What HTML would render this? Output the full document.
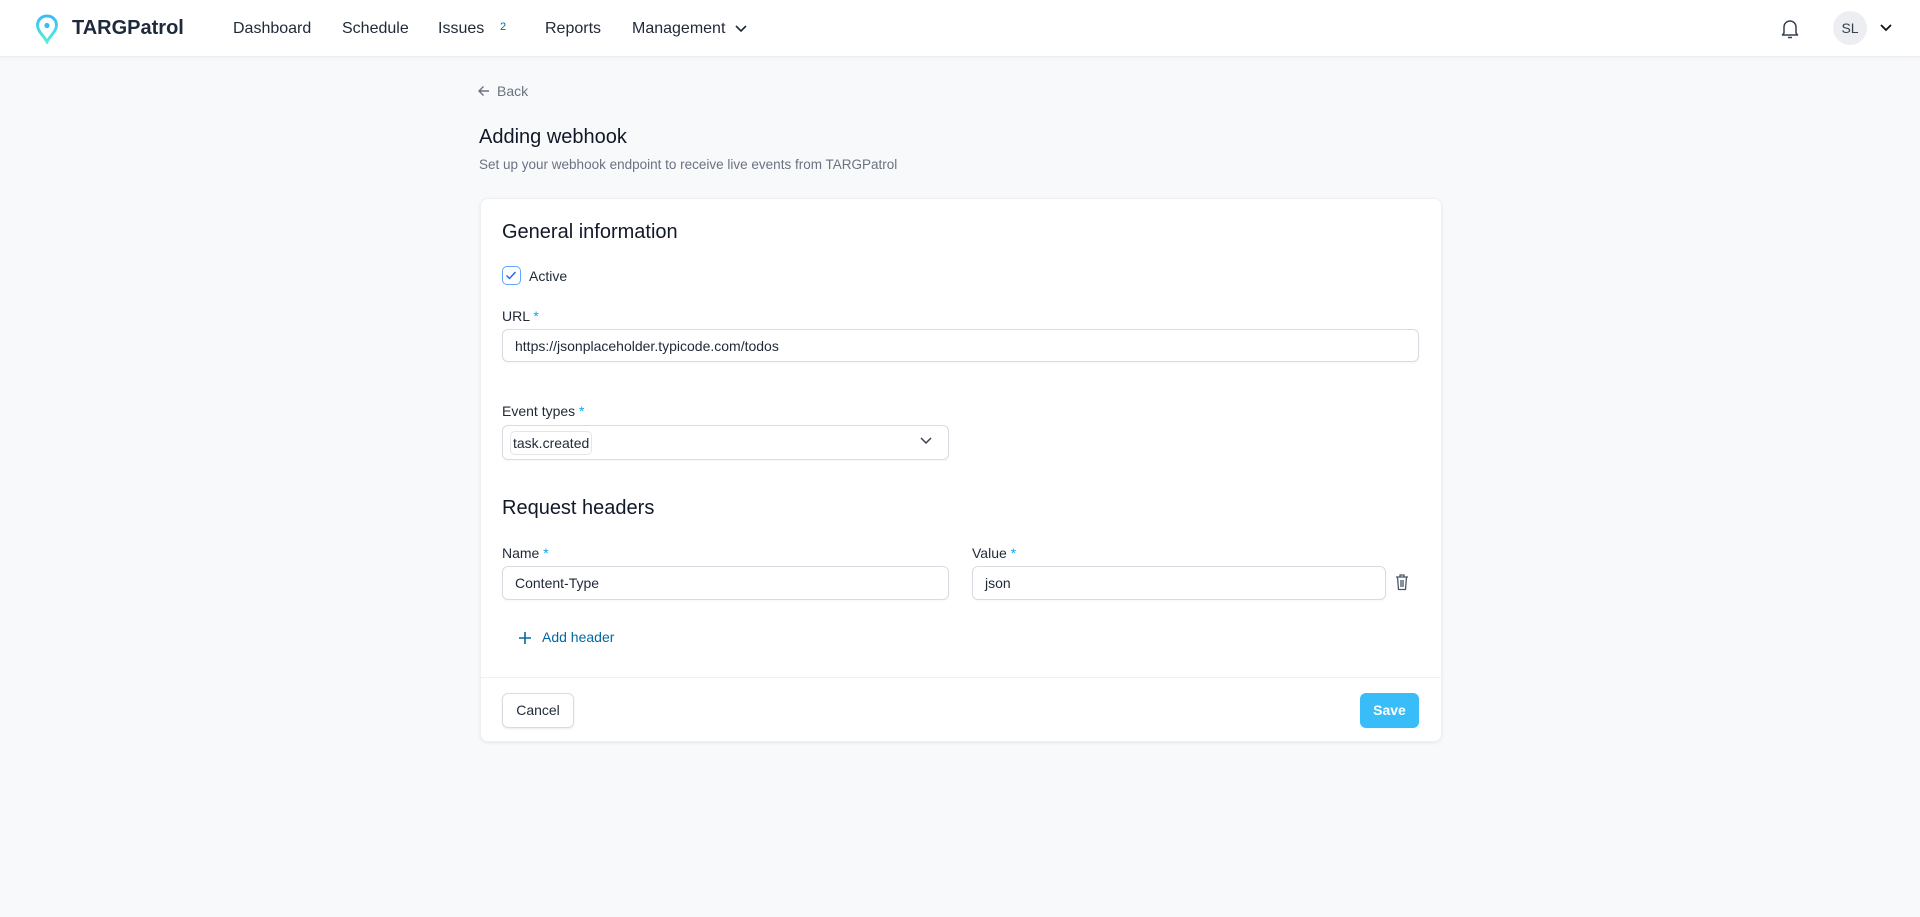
<!DOCTYPE html>
<html><head><meta charset="utf-8"><style>
*{box-sizing:border-box;margin:0;padding:0}
body{width:1920px;height:917px;background:#f8f9fb;font-family:"Liberation Sans",sans-serif;color:#1f2937;position:relative;overflow:hidden}
.abs{position:absolute}
.nav{position:absolute;left:0;top:0;width:1920px;height:57px;background:#fff;border-bottom:1px solid #eceef2;box-shadow:0 1px 3px rgba(0,0,0,.04)}
.nl{position:absolute;top:20px;font-size:16px;color:#1f2937}
.card{position:absolute;left:480px;top:198px;width:962px;height:544px;background:#fff;border-radius:8px;box-shadow:0 1px 3px rgba(0,0,0,.08);border:1px solid #eef0f3}
.lbl{position:absolute;font-size:14px;color:#1f2937}
.lbl b{color:#0ea5e9;font-weight:normal}
.inp{position:absolute;border:1px solid #d8dce2;border-radius:6px;background:#fff;font-size:14px;padding-left:12px;display:flex;align-items:center;box-shadow:0 1px 2px rgba(0,0,0,.04)}
h2{position:absolute;font-size:20px;font-weight:normal;color:#111827}
</style></head><body>
<div class="nav">
<svg class="abs" style="left:35px;top:14px" width="24" height="30" viewBox="0 0 24 30"><defs><linearGradient id="g" x1="0" y1="0" x2="0" y2="1"><stop offset="0" stop-color="#38bdf8"/><stop offset="1" stop-color="#5eead4"/></linearGradient></defs><path d="M12 2C6.5 2 2.5 6 2.5 11.3c0 6 6 10 9.5 16.5 3.5-6.5 9.5-10.5 9.5-16.5C21.5 6 17.5 2 12 2z" fill="none" stroke="url(#g)" stroke-width="3"/><circle cx="12" cy="11.5" r="2.6" fill="#38bdf8"/></svg>
<div class="abs" style="left:72px;top:17px;font-size:20px;font-weight:bold;color:#1e293b">TARGPatrol</div>
<div class="nl" style="left:233px">Dashboard</div>
<div class="nl" style="left:342px">Schedule</div>
<div class="nl" style="left:438px">Issues</div>
<div class="abs" style="left:500px;top:21px;font-size:11px;color:#0369a1">2</div>
<div class="nl" style="left:545px">Reports</div>
<div class="nl" style="left:632px">Management</div>
<svg class="abs" style="left:734px;top:24px" width="14" height="10" viewBox="0 0 14 10"><path d="M2 2l5 5 5-5" fill="none" stroke="#1f2937" stroke-width="1.6"/></svg>
<svg class="abs" style="left:1780px;top:18px" width="20" height="22" viewBox="0 0 20 22"><path d="M4 15V9a6 6 0 0 1 12 0v6l1.5 2h-15z M8 19.5h4" fill="none" stroke="#374151" stroke-width="1.5" stroke-linejoin="round"/></svg>
<div class="abs" style="left:1833px;top:11px;width:34px;height:34px;border-radius:50%;background:#eceef2;font-size:14px;color:#374151;text-align:center;line-height:34px">SL</div>
<svg class="abs" style="left:1879px;top:23px" width="14" height="10" viewBox="0 0 14 10"><path d="M2 2l5 5 5-5" fill="none" stroke="#111" stroke-width="1.8"/></svg>
</div>
<svg class="abs" style="left:477px;top:84px" width="14" height="14" viewBox="0 0 14 14"><path d="M12 7H2M6.5 2.5L2 7l4.5 4.5" fill="none" stroke="#6b7280" stroke-width="1.4"/></svg>
<div class="abs" style="left:497px;top:83px;font-size:14px;color:#6b7280">Back</div>
<div class="abs" style="left:479px;top:126px;font-size:20px;color:#111827">Adding webhook</div>
<div class="abs" style="left:479px;top:157px;font-size:13.5px;color:#6b7280">Set up your webhook endpoint to receive live events from TARGPatrol</div>
<div class="card"></div>
<h2 style="left:502px;top:221px">General information</h2>
<div class="abs" style="left:502px;top:266px;width:19px;height:19px;border:1.5px solid #60a5fa;border-radius:5px"><svg width="16" height="16" viewBox="0 0 16 16"><path d="M3.5 8.5l3 3 6-6.5" fill="none" stroke="#2563eb" stroke-width="1.4"/></svg></div>
<div class="lbl" style="left:529px;top:268px">Active</div>
<div class="lbl" style="left:502px;top:308px">URL <b>*</b></div>
<div class="inp" style="left:502px;top:329px;width:917px;height:33px">https://jsonplaceholder.typicode.com/todos</div>
<div class="lbl" style="left:502px;top:403px">Event types <b>*</b></div>
<div class="inp" style="left:502px;top:425px;width:447px;height:35px;padding-left:7px"><span style="border:1px solid #e2e5ea;border-radius:5px;padding:3px 2px;font-size:14px">task.created</span></div>
<svg class="abs" style="left:919px;top:436px" width="14" height="10" viewBox="0 0 14 10"><path d="M2 2l5 5 5-5" fill="none" stroke="#374151" stroke-width="1.5"/></svg>
<h2 style="left:502px;top:497px">Request headers</h2>
<div class="lbl" style="left:502px;top:545px">Name <b>*</b></div>
<div class="lbl" style="left:972px;top:545px">Value <b>*</b></div>
<div class="inp" style="left:502px;top:566px;width:447px;height:34px">Content-Type</div>
<div class="inp" style="left:972px;top:566px;width:414px;height:34px">json</div>
<svg class="abs" style="left:1394px;top:572px" width="16" height="20" viewBox="0 0 16 20"><path d="M2 5h12M6 5V3h4v2M3.5 5l1 12.5h7l1-12.5M7 8v7M9 8v7" fill="none" stroke="#4b5563" stroke-width="1.3"/></svg>
<svg class="abs" style="left:518px;top:631px" width="14" height="14" viewBox="0 0 14 14"><path d="M7 1v12M1 7h12" stroke="#0369a1" stroke-width="1.6"/></svg>
<div class="abs" style="left:542px;top:629px;font-size:14px;color:#0369a1">Add header</div>
<div class="abs" style="left:481px;top:677px;width:960px;border-top:1px solid #eef0f3"></div>
<div class="abs" style="left:502px;top:693px;width:72px;height:35px;border:1px solid #d8dce2;border-radius:6px;background:#fff;font-size:14px;text-align:center;line-height:33px;box-shadow:0 1px 2px rgba(0,0,0,.08)">Cancel</div>
<div class="abs" style="left:1360px;top:693px;width:59px;height:35px;border-radius:6px;background:#38bdf8;color:#fff;font-size:14px;font-weight:bold;text-align:center;line-height:35px">Save</div>
</body></html>
